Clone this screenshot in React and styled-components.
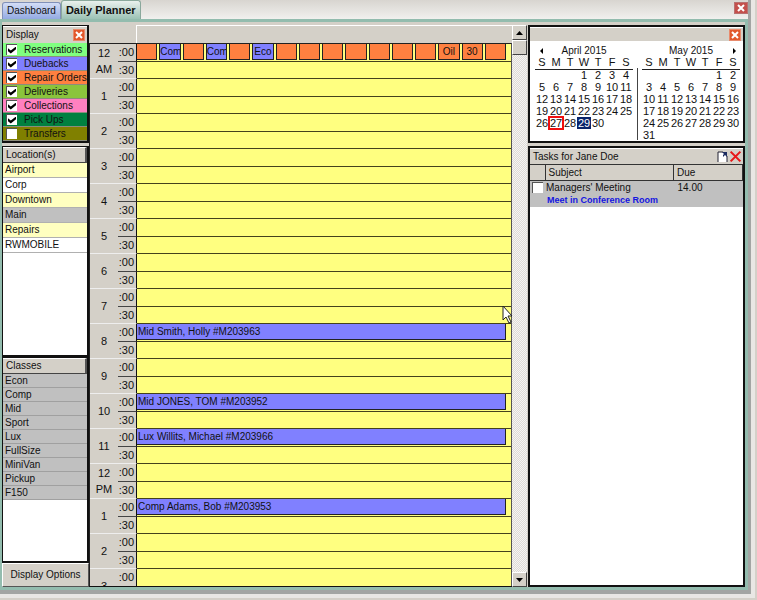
import React, { useState } from 'react';
import styled, { createGlobalStyle } from 'styled-components';

const GlobalStyle = createGlobalStyle`
  * {
    box-sizing: border-box;
  }

  body {
    margin: 0;
    background: #e9e7e4;
    color: #111;
    font-family: 'Liberation Sans', Arial, sans-serif;
    font-size: 10px;
    line-height: 14px;
  }

  button,
  input {
    font: inherit;
    color: inherit;
    margin: 0;
    padding: 0;
  }

  ul,
  ol {
    list-style: none;
    margin: 0;
    padding: 0;
  }
`;

const Page = styled.div`
  display: flex;
  height: 100vh;
  padding: 0 4px 4px 0;
  border-right: 2px solid #d4d0c8;
  border-bottom: 2px solid #d4d0c8;
`;

const Window = styled.main`
  display: flex;
  flex: 1;
  flex-direction: column;
  min-width: 0;
  border-right: 3px solid #a3a5a3;
  border-bottom: 4px solid #a3a5a3;
`;

const TabStrip = styled.nav`
  display: flex;
  align-items: flex-end;
  height: 19px;
  padding: 0 0 0 2px;
  background: linear-gradient(#d8d5d0, #f1f0ee);
`;

const Tab = styled.button`
  height: ${props => (props.$active ? 19 : 17)}px;
  padding: 0 4px;
  border: 1px solid ${props => (props.$active ? '#8aa89c' : '#8090b8')};
  border-bottom: 0;
  border-radius: 3px 3px 0 0;
  background: ${props =>
    props.$active
      ? 'linear-gradient(#e9f0ed, #9cc2b5)'
      : 'linear-gradient(#d3ddf6, #93aae2)'};
  font-size: ${props => (props.$active ? 11 : 10)}px;
  font-weight: ${props => (props.$active ? 'bold' : 'normal')};
  white-space: nowrap;
`;

const Close = styled.button`
  display: flex;
  align-items: center;
  justify-content: center;
  flex: none;
  width: ${props => (props.$large ? 14 : 12)}px;
  height: 12px;
  border: 1px solid ${props => (props.$large ? '#b87070' : '#e88a6c')};
  background: ${props => (props.$large ? '#c4504c' : '#e2582c')};
`;

const StripClose = styled.div`
  margin: 0 0 5px auto;
`;

const Frame = styled.div`
  display: flex;
  flex: 1;
  min-height: 0;
  padding-top: 3px;
  border: solid #93bcae;
  border-width: 3px 3px 3px 2px;
  background: #d4d0c8;
`;

const Sidebar = styled.aside`
  display: flex;
  flex: none;
  flex-direction: column;
  width: 87px;
  gap: 3px;
`;

const Panel = styled.section`
  display: flex;
  flex-direction: column;
  flex: ${props => props.$flex || 'none'};
  min-height: 0;
  border: 1px solid #111;
  border-right-width: 2px;
  border-bottom-width: 2px;
  background: #fff;
`;

const PanelTitle = styled.header`
  display: flex;
  align-items: center;
  justify-content: space-between;
  flex: none;
  height: ${props => props.$height || 16}px;
  padding: 0 2px 0 3px;
  border-top: 1px solid #fff;
  background: #d4d0c8;
  white-space: nowrap;
`;

const ListTitle = styled(PanelTitle)`
  border-right: 2px solid #555;
  border-bottom: 1px solid #444;
`;

const Filter = styled.label`
  display: flex;
  align-items: center;
  gap: 7px;
  height: 14px;
  padding-left: 3px;
  border-bottom: 1px solid #8c8c7c;
  background: ${props => props.$color};
  white-space: nowrap;
`;

const Check = styled.input.attrs({ type: 'checkbox' })`
  appearance: none;
  display: grid;
  place-items: center;
  flex: none;
  width: 11px;
  height: 11px;
  border: solid #555;
  border-width: 1px 0 0 1px;
  background: #fff;

  &:checked::before {
    content: '';
    width: 8px;
    height: 7px;
    background: #000;
    clip-path: polygon(0 26%, 35% 58%, 100% 0, 100% 40%, 35% 100%, 0 68%);
  }
`;

const Location = styled.li`
  height: 15px;
  padding-left: 2px;
  border-bottom: 1px solid #b0b0b0;
  background: ${props => props.$color};
`;

const VehicleClass = styled.li`
  height: 14px;
  padding-left: 2px;
  border-bottom: 1px solid #a0a0a0;
  background: #c0c0c0;
`;

const OptionsButton = styled.button`
  flex: none;
  height: 24px;
  border: 1px solid;
  border-color: #fff #555 #555 #fff;
  background: #d4d0c8;
`;

const SidebarStack = styled.div`
  display: flex;
  flex: 1;
  flex-direction: column;
  min-height: 0;
`;

const Schedule = styled.section`
  position: relative;
  display: flex;
  flex: 1;
  flex-direction: column;
  min-width: 0;
  border-bottom: 1px solid #111;
`;

const ScheduleHeader = styled.div`
  flex: none;
  height: 18px;
  margin-left: 47px;
  border: solid #fff;
  border-width: 1px 0 0 1px;
`;

const Hours = styled.ol`
  flex: 1;
  min-height: 0;
  overflow: hidden;
  border-left: 1px solid #222;
  border-right: 1px solid #555;
  border-top: 1px solid #222;
`;

const Hour = styled.li`
  display: grid;
  grid-template-columns: 28px 19px 1fr;
  grid-template-rows: 18px 17px;
  height: 35px;
`;

const HourLabel = styled.div`
  display: flex;
  flex-direction: column;
  justify-content: center;
  grid-row: 1 / 3;
  border-bottom: 1px solid #eee;
  font-size: 11px;
  line-height: 16px;
  text-align: center;
`;

const Minutes = styled.div`
  padding-right: 2px;
  border-right: 1px solid #111;
  border-bottom: 1px solid ${props => (props.$half ? '#eee' : '#444')};
  font-size: 11px;
  line-height: 16px;
  text-align: right;
`;

const Slot = styled.div`
  display: flex;
  gap: 2px;
  min-width: 0;
  padding: 0 5px 1px 0;
  border-bottom: 1px solid #44421c;
  background: #ffff80;
`;

const Booking = styled.div`
  flex: 1 1 0;
  min-width: 0;
  overflow: hidden;
  padding-left: ${props => (props.$center ? 0 : 1)}px;
  border: solid #222;
  border-width: 0 1px 1px ${props => (props.$boxed ? 1 : 0)}px;
  background: ${props => props.$color};
  line-height: 15px;
  text-align: ${props => (props.$center ? 'center' : 'left')};
  white-space: nowrap;
`;

const Pointer = styled.svg`
  position: absolute;
  top: 280px;
  right: -2px;
`;

const ScrollBar = styled.div`
  display: flex;
  flex: none;
  flex-direction: column;
  width: 15px;
  margin-right: 1px;
  background: repeating-conic-gradient(#f6f5f3 0 25%, #dedbd6 0 50%) 0 0 / 2px 2px;
`;

const ScrollButton = styled.button`
  display: grid;
  place-items: center;
  height: 15px;
  border: 1px solid;
  border-color: #fff #444 #444 #fff;
  background: #d4d0c8;
`;

const ScrollTrack = styled.div`
  flex: 1;
`;

const ScrollThumb = styled.div`
  height: 15px;
  border: 1px solid;
  border-color: #fff #444 #444 #fff;
  background: #d4d0c8;
`;

const RightColumn = styled.aside`
  display: flex;
  flex: none;
  flex-direction: column;
  width: 217px;
  gap: 3px;
`;

const RightPanel = styled(Panel)`
  border-width: 2px;
`;

const Months = styled.div`
  display: flex;
  gap: 4px;
  padding: 4px 3px 0 5px;
`;

const MonthDivider = styled.div`
  width: 1px;
  margin: 23px 0 1px;
  background: #444;
`;

const Month = styled.div`
  flex: 1;
`;

const MonthHead = styled.div`
  display: grid;
  grid-template-columns: 12px 1fr 12px;
  height: 12px;
  line-height: 12px;
  text-align: center;
`;

const MonthNav = styled.button`
  display: grid;
  grid-column: ${props => props.$column};
  grid-row: 1;
  place-items: center;
  border: 0;
  background: none;
`;

const MonthName = styled.span`
  grid-column: 2;
  grid-row: 1;
`;

const Days = styled.table`
  width: 100%;
  border-collapse: collapse;
  table-layout: fixed;
  font-size: 11px;
  line-height: 11px;
  text-align: center;

  th,
  td {
    height: 12px;
    padding: 0;
    font-weight: normal;
  }

  th {
    border-bottom: 1px solid #222;
  }
`;

const Day = styled.td`
  color: ${props => (props.$mark === 'selected' ? '#fff' : '#111')};
  background: ${props => (props.$mark === 'selected' ? '#0a246a' : 'none')};
  outline: ${props => (props.$mark === 'today' ? '2px solid #f01010' : '0')};
  outline-offset: -1px;
`;

const TaskTools = styled.span`
  display: flex;
  gap: 1px;
`;

const ToolButton = styled.button`
  display: grid;
  place-items: center;
  width: 12px;
  height: 13px;
  border: 0;
  background: none;
`;

const Tasks = styled.table`
  width: 100%;
  border-collapse: collapse;
  table-layout: fixed;
  text-align: left;

  th {
    height: 16px;
    padding: 0 0 0 3px;
    border: solid #333;
    border-width: 1px 1px 1px 0;
    background: #d4d0c8;
    font-weight: normal;
  }

  td {
    height: 26px;
    padding: 0 0 0 1px;
    background: #c0c0c0;
    vertical-align: top;
  }

  td:first-child {
    padding: 1px 0 0 2px;
  }

  td:last-child {
    padding-left: 4px;
  }
`;

const TaskNote = styled.div`
  padding-left: 1px;
  color: #1414e0;
  font-size: 9px;
  font-weight: bold;
  line-height: 11px;
`;

const ORANGE = '#ff8040';
const BLUE = '#8080ff';

const filters = [
  ['Reservations', '#80ff80', true],
  ['Duebacks', BLUE, true],
  ['Repair Orders', ORANGE, true],
  ['Deliveries', '#8ac43c', true],
  ['Collections', '#ff80c0', true],
  ['Pick Ups', '#008040', true],
  ['Transfers', '#808000', false]
];

const locations = ['Airport', 'Corp', 'Downtown', 'Main', 'Repairs', 'RWMOBILE'];
const classes = ['Econ', 'Comp', 'Mid', 'Sport', 'Lux', 'FullSize', 'MiniVan', 'Pickup', 'F150'];

const hours = [12, 1, 2, 3, 4, 5, 6, 7, 8, 9, 10, 11, 12, 1, 2, 3];

const allDay = ['', 'Com', '', 'Com', '', 'Eco', '', '', '', '', '', '', '', 'Oil', '30', ''];

const bookings = {
  8: 'Mid Smith, Holly #M203963',
  10: 'Mid JONES, TOM #M203952',
  11: 'Lux Willits, Michael #M203966',
  13: 'Comp Adams, Bob #M203953'
};

const locationColor = (name, index) => {
  if (name === 'Main') return '#c0c0c0';
  return index % 2 ? '#fff' : '#ffffc0';
};

const weeksOf = (offset, count) => {
  const cells = Array(offset).fill('');
  for (let day = 1; day <= count; day++) cells.push(day);
  while (cells.length % 7) cells.push('');
  return Array.from({ length: cells.length / 7 }, (_, i) => cells.slice(i * 7, i * 7 + 7));
};

const Cross = ({ size = 8, color = '#fff', width = 2 }) => (
  <svg width={size} height={size} viewBox="0 0 8 8">
    <path d="M1 1L7 7M7 1L1 7" stroke={color} strokeWidth={width} />
  </svg>
);

const Arrow = ({ d, width = 7, height = 4 }) => (
  <svg width={width} height={height}>
    <path d={d} fill="#000" />
  </svg>
);

const CalendarMonth = ({ name, offset, count, marks = {}, nav }) => (
  <Month>
    <MonthHead>
      {nav === 'prev' && (
        <MonthNav $column={1} aria-label="Previous month">
          <Arrow d="M3 0V6L0 3Z" width={3} height={6} />
        </MonthNav>
      )}
      <MonthName>{name}</MonthName>
      {nav === 'next' && (
        <MonthNav $column={3} aria-label="Next month">
          <Arrow d="M0 0V6L3 3Z" width={3} height={6} />
        </MonthNav>
      )}
    </MonthHead>
    <Days aria-label={name}>
      <thead>
        <tr>
          {'SMTWTFS'.split('').map((letter, i) => (
            <th key={i}>{letter}</th>
          ))}
        </tr>
      </thead>
      <tbody>
        {weeksOf(offset, count).map((week, i) => (
          <tr key={i}>
            {week.map((day, j) => (
              <Day key={j} $mark={marks[day]}>
                {day}
              </Day>
            ))}
          </tr>
        ))}
      </tbody>
    </Days>
  </Month>
);

const FilterRow = ({ label, color, initial }) => {
  const [checked, setChecked] = useState(initial);
  return (
    <Filter $color={color}>
      <Check checked={checked} onChange={() => setChecked(!checked)} />
      {label}
    </Filter>
  );
};

const HourRow = ({ hour, index }) => (
  <Hour>
    <HourLabel>
      <span>{hour}</span>
      {hour === 12 && <span>{index === 0 ? 'AM' : 'PM'}</span>}
    </HourLabel>
    <Minutes>:00</Minutes>
    <Slot>
      {index === 0 &&
        allDay.map((text, i) => (
          <Booking key={i} $boxed={i > 0} $center $color={/Com|Eco/.test(text) ? BLUE : ORANGE}>
            {text}
          </Booking>
        ))}
      {bookings[index] && <Booking $color={BLUE}>{bookings[index]}</Booking>}
    </Slot>
    <Minutes $half>:30</Minutes>
    <Slot />
  </Hour>
);

const App = () => (
  <Page>
    <GlobalStyle />
    <Window>
      <TabStrip>
        <Tab>Dashboard</Tab>
        <Tab $active>Daily Planner</Tab>
        <StripClose>
          <Close $large aria-label="Close window">
            <Cross />
          </Close>
        </StripClose>
      </TabStrip>
      <Frame>
        <Sidebar>
          <Panel>
            <PanelTitle $height={17}>
              Display
              <Close aria-label="Close display">
                <Cross />
              </Close>
            </PanelTitle>
            {filters.map(([label, color, initial]) => (
              <FilterRow key={label} label={label} color={color} initial={initial} />
            ))}
          </Panel>
          <SidebarStack>
            <Panel $flex="0 1 211px">
              <ListTitle>Location(s)</ListTitle>
              <ul>
                {locations.map((name, i) => (
                  <Location key={name} $color={locationColor(name, i)}>
                    {name}
                  </Location>
                ))}
              </ul>
            </Panel>
            <Panel $flex="1">
              <ListTitle>Classes</ListTitle>
              <ul>
                {classes.map(name => (
                  <VehicleClass key={name}>{name}</VehicleClass>
                ))}
              </ul>
            </Panel>
            <OptionsButton>Display Options</OptionsButton>
          </SidebarStack>
        </Sidebar>
        <Schedule>
          <ScheduleHeader />
          <Hours>
            {hours.map((hour, i) => (
              <HourRow key={i} hour={hour} index={i} />
            ))}
          </Hours>
          <Pointer width="12" height="19" viewBox="0 0 12 19">
            <path
              d="M1 1V15L4 12L7 18L9 17L6 11H10Z"
              fill="#fff"
              stroke="#222"
              strokeWidth="1"
            />
          </Pointer>
        </Schedule>
        <ScrollBar>
          <ScrollButton aria-label="Scroll up">
            <Arrow d="M0 4H7L3.5 0Z" />
          </ScrollButton>
          <ScrollTrack>
            <ScrollThumb />
          </ScrollTrack>
          <ScrollButton aria-label="Scroll down">
            <Arrow d="M0 0H7L3.5 4Z" />
          </ScrollButton>
        </ScrollBar>
        <RightColumn>
          <RightPanel>
            <PanelTitle $height={14}>
              <span />
              <Close aria-label="Close calendar">
                <Cross />
              </Close>
            </PanelTitle>
            <Months>
              <CalendarMonth
                name="April 2015"
                offset={3}
                count={30}
                marks={{ 27: 'today', 29: 'selected' }}
                nav="prev"
              />
              <MonthDivider />
              <CalendarMonth name="May 2015" offset={5} count={31} nav="next" />
            </Months>
          </RightPanel>
          <RightPanel $flex="1">
            <PanelTitle>
              Tasks for Jane Doe
              <TaskTools>
                <ToolButton aria-label="New task">
                  <svg width="11" height="12" viewBox="0 0 11 12">
                    <path d="M1 1H7L10 4V11H1Z" fill="#fff" />
                    <path d="M1 11V1H6M10 5V11" fill="none" stroke="#223" />
                    <path d="M5 1H10V6L8 4L6 6V4L7 3Z" fill="#1c2c60" />
                  </svg>
                </ToolButton>
                <ToolButton aria-label="Delete task">
                  <Cross size={13} color="#e81818" width={1.3} />
                </ToolButton>
              </TaskTools>
            </PanelTitle>
            <Tasks>
              <colgroup>
                <col width="15" />
                <col />
                <col width="69" />
              </colgroup>
              <thead>
                <tr>
                  <th aria-label="Done" />
                  <th>Subject</th>
                  <th>Due</th>
                </tr>
              </thead>
              <tbody>
                <tr>
                  <td>
                    <Check aria-label="Managers' Meeting done" />
                  </td>
                  <td>
                    Managers' Meeting
                    <TaskNote>Meet in Conference Room</TaskNote>
                  </td>
                  <td>14.00</td>
                </tr>
              </tbody>
            </Tasks>
          </RightPanel>
        </RightColumn>
      </Frame>
    </Window>
  </Page>
);

export default App;
